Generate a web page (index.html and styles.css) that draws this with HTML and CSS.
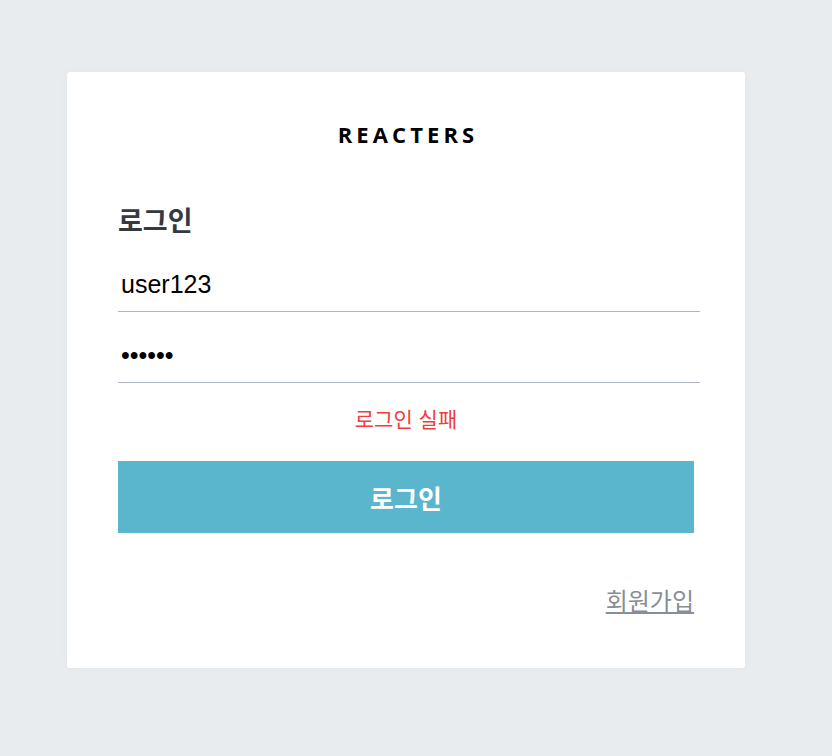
FILE: index.html
```html
<!DOCTYPE html>
<html lang="ko">
<head>
<meta charset="utf-8">
<title>REACTERS 로그인</title>
<link rel="stylesheet" href="styles.css">
</head>
<body>
  <div class="auth-card">
    <div class="logo">REACTERS</div>
    <h3 class="auth-title">로그인</h3>
    <form class="auth-form">
      <input class="auth-input" type="text" name="username" value="user123" placeholder="아이디">
      <input class="auth-input auth-input-pw" type="password" name="password" value="123456" placeholder="비밀번호">
      <div class="auth-error">로그인 실패</div>
      <button class="auth-button" type="button">로그인</button>
    </form>
    <div class="auth-footer">
      <a class="auth-link" href="#">회원가입</a>
    </div>
  </div>
</body>
</html>
```

FILE: styles.css
```css
html, body {
  margin: 0;
  padding: 0;
}
body {
  background: #e9ecef;
  font-family: "Liberation Sans", "Noto Sans CJK KR", sans-serif;
  min-height: 756px;
}
.auth-card {
  box-sizing: border-box;
  width: 678px;
  margin: 72px 0 0 67px;
  padding: 48px 51px 48px;
  background: #ffffff;
  border-radius: 3px;
  box-shadow: 0 0 8px rgba(0, 0, 0, 0.03);
}
.logo {
  font-family: "Open Sans", sans-serif;
  font-weight: 700;
  font-size: 22px;
  line-height: 28px;
  letter-spacing: 4.1px;
  text-indent: 4px;
  text-align: center;
  color: #000000;
}
.auth-title {
  margin: 56px 0 0;
  font-family: "Noto Sans CJK KR", sans-serif;
  font-weight: 700;
  font-size: 27px;
  line-height: 32px;
  color: #343a40;
}
.auth-form {
  margin: 23px 0 0;
  display: flex;
  flex-direction: column;
}
.auth-input {
  box-sizing: border-box;
  display: block;
  width: 582px;
  height: 53px;
  margin: 0;
  padding: 11px 3px 13px;
  border: none;
  border-bottom: 1px solid #adb5bd;
  outline: none;
  font-family: "Liberation Sans", sans-serif;
  font-size: 25px;
  line-height: 28px;
  color: #000000;
  background: transparent;
}
.auth-input-pw {
  margin-top: 18px;
}
.auth-error {
  margin-top: 21px;
  font-family: "Noto Sans CJK KR", sans-serif;
  font-size: 21px;
  line-height: 28px;
  text-align: center;
  color: #f03e3e;
}
.auth-button {
  box-sizing: border-box;
  width: 576px;
  height: 72px;
  margin-top: 29px;
  padding: 0;
  border: none;
  border-radius: 0;
  background: #59b6cc;
  color: #ffffff;
  font-family: "Noto Sans CJK KR", sans-serif;
  font-weight: 700;
  font-size: 26px;
  cursor: pointer;
}
.auth-footer {
  margin-top: 52px;
  width: 576px;
  text-align: right;
  line-height: 30px;
}
.auth-link {
  font-family: "Noto Sans CJK KR", sans-serif;
  font-size: 24px;
  color: #868e96;
  text-decoration: underline;
}
```
